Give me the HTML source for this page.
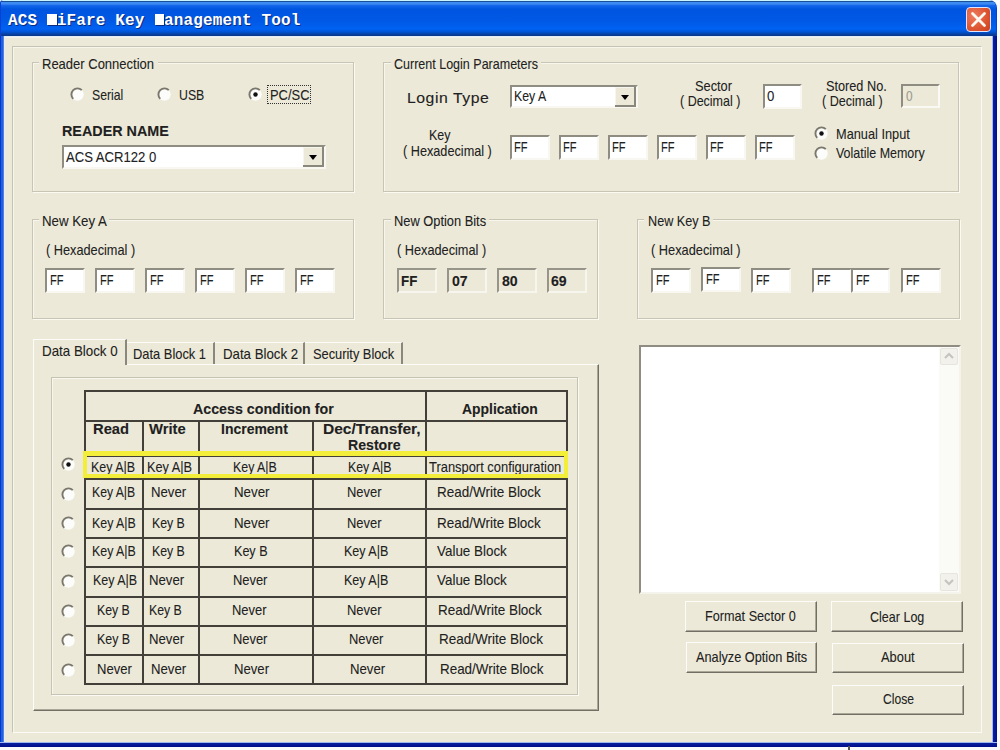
<!DOCTYPE html>
<html><head><meta charset="utf-8">
<style>
*{margin:0;padding:0;box-sizing:border-box}
html,body{width:1000px;height:750px;overflow:hidden;background:#FBFBFB;font-family:"Liberation Sans",sans-serif}
body>div,body>svg{position:absolute}
.a{position:absolute}
.t{white-space:nowrap;transform-origin:0 0;-webkit-text-stroke:0.1px #303030}
#ttext{left:8px;top:13px;transform-origin:0 0;font-family:"Liberation Mono",monospace;font-weight:bold;font-size:16px;line-height:16px;white-space:nowrap;color:#fff;text-shadow:1px 1px 0 #0a2a80}
.etch{border:1px solid #C5C3B2;box-shadow:1px 1px 0 #FBFAF4, inset 1px 1px 0 #F7F6EF}
.etch2{border-style:solid;border-width:1px;border-color:#C5C3B2 #FBFAF4 #FBFAF4 #C5C3B2;box-shadow:inset 1px 1px 0 #F6F5EE}
.grp{border:1px solid #C8C5B4;box-shadow:1px 1px 0 #FAF9F2, inset 1px 1px 0 #F6F5EE}
.ed{background:#fff;border-style:solid;border-width:2px;border-color:#8F8D82 #F8F7F2 #F8F7F2 #8F8D82}
.ro{background:#ECE9D8;border-color:#979589 #F6F5EE #F6F5EE #979589}
.dis{background:#ECE9D8;border-color:#8F8D82 #FAF9F4 #FAF9F4 #8F8D82}
.btn{background:#ECE9D8;border-style:solid;border-width:1px;border-color:#FCFCF8 #716F64 #716F64 #FCFCF8;box-shadow:inset -1px -1px 0 #ACA899}
.dd{background:#ECE9D8;border-style:solid;border-width:0 2px 2px 0;border-color:#8A887C;box-shadow:inset 1px 1px 0 #F6F5EE}
.dd i{position:absolute;width:0;height:0;border-left:4.5px solid transparent;border-right:4.5px solid transparent;border-top:5px solid #000}
.tabp{background:#ECE9D8;border-style:solid;border-width:1px;border-color:#FCFCF8 #716F64 #716F64 #FCFCF8;box-shadow:inset -1px -1px 0 #ACA899}
.tab{background:#ECE9D8;border-style:solid;border-width:1px 2px 0 0;border-color:#FCFCF8 #8A887C transparent transparent}
.tab.sel{border-width:1px 2px 0 1px;border-color:#FCFCF8 #8A887C transparent #FCFCF8}
.ln{background:#424039}
.log{border-color:#8F8D82 #F4F3EC #F4F3EC #8F8D82}
.sbb{background:#F2F1EC;border:1px solid #E6E5DE;border-radius:2px}
svg.r{position:absolute}

.blk{display:inline-block;width:9.6px;height:16px;vertical-align:top;position:relative}
.blk:after{content:'';position:absolute;left:0.4px;top:1.2px;width:9.2px;height:11px;background:#fff;box-shadow:1px 1px 0 #0a2a80}

.tc{display:inline-block;width:9.75px;text-align:center;vertical-align:top;font-weight:bold}
.blk{width:9.75px!important}

</style></head><body>
<div class="a" style="left:0;top:0;width:997px;height:747px;background:#0A3FD8;border-radius:3px 8px 0 0"></div>
<div class="a" style="left:1px;top:0;width:995px;height:36px;border-radius:2px 7px 0 0;background:linear-gradient(#C8F4FF 0px,#C8F4FF 0.8px,#1A4F9A 1px,#1A4F9A 2px,#3D8AF0 2.2px,#3D8AF0 4px,#1466EA 5.5px,#0055E0 9px,#0058E4 20px,#0062F2 29px,#0052D4 32px,#0A3A90 35px,#0A3A90 36px)"></div>
<div class="a" style="left:0;top:36px;width:4px;height:711px;background:linear-gradient(90deg,#0038D0 0,#0038D0 1px,#2060E0 1px,#2060E0 3px,#5080E0 3px)"></div>
<div class="a" style="left:992px;top:36px;width:5px;height:711px;background:linear-gradient(90deg,#A0B8F0 0,#A0B8F0 1px,#0A1F9E 1px,#00108A 5px)"></div>
<div class="a" style="left:0;top:742px;width:997px;height:5px;background:linear-gradient(#A0B8F0 0,#A0B8F0 1px,#0A1F9E 1px,#00108A 5px)"></div>
<div class="a" style="left:4px;top:36px;width:988px;height:706px;background:#ECE9D8;box-shadow:inset 1px 1px 0 #E4ECF8, inset 0 2px 0 #F2F1EA"></div>
<div id="ttext"><b class="tc">A</b><b class="tc">C</b><b class="tc">S</b><b class="tc">&nbsp;</b><span class="blk"></span><b class="tc">i</b><b class="tc">F</b><b class="tc">a</b><b class="tc">r</b><b class="tc">e</b><b class="tc">&nbsp;</b><b class="tc">K</b><b class="tc">e</b><b class="tc">y</b><b class="tc">&nbsp;</b><span class="blk"></span><b class="tc">a</b><b class="tc">n</b><b class="tc">a</b><b class="tc">g</b><b class="tc">e</b><b class="tc">m</b><b class="tc">e</b><b class="tc">n</b><b class="tc">t</b><b class="tc">&nbsp;</b><b class="tc">T</b><b class="tc">o</b><b class="tc">o</b><b class="tc">l</b></div>
<div class="a" style="left:966px;top:7px;width:25px;height:25px;border-radius:4px;border:1.5px solid #E0E4FF;background:radial-gradient(circle at 30% 35%,#EE7A60,#DD5530 60%,#C8401C)"></div>
<svg class="a" style="left:966px;top:7px" width="25" height="25"><path d="M6.5 6.5 L18.5 18.5 M18.5 6.5 L6.5 18.5" stroke="#FFF8F0" stroke-width="2.8" stroke-linecap="round"/></svg>
<div class="a" style="left:848px;top:746px;width:2px;height:4px;background:#555"></div>
<div class="etch2" style="left:12px;top:46px;width:970px;height:687px;"></div>
<div class="grp" style="left:32px;top:62px;width:322px;height:130px;"></div>
<div class="a" style="left:39px;top:55px;width:119px;height:14px;background:#ECE9D8"></div>
<div class="t" style="left:42.20px;top:56.00px;font-size:15px;line-height:15px;transform:scaleX(0.8667);color:#202020;">Reader Connection</div>
<svg class="r" style="left:69.5px;top:87.4px" width="15" height="15" viewBox="0 0 15 15"><circle cx="7.5" cy="7.5" r="6.2" fill="#fcfcfa"/><path d="M3.2 11.8 A6 6 0 0 1 11.8 3.2" stroke="#7a786c" stroke-width="1.9" fill="none"/></svg>
<div class="t" style="left:91.50px;top:87.00px;font-size:15px;line-height:15px;transform:scaleX(0.8158);color:#202020;">Serial</div>
<svg class="r" style="left:156.5px;top:87.4px" width="15" height="15" viewBox="0 0 15 15"><circle cx="7.5" cy="7.5" r="6.2" fill="#fcfcfa"/><path d="M3.2 11.8 A6 6 0 0 1 11.8 3.2" stroke="#7a786c" stroke-width="1.9" fill="none"/></svg>
<div class="t" style="left:178.60px;top:87.00px;font-size:15px;line-height:15px;transform:scaleX(0.8194);color:#202020;">USB</div>
<svg class="r" style="left:247.5px;top:87.4px" width="15" height="15" viewBox="0 0 15 15"><circle cx="7.5" cy="7.5" r="6.2" fill="#fcfcfa"/><path d="M3.2 11.8 A6 6 0 0 1 11.8 3.2" stroke="#7a786c" stroke-width="1.9" fill="none"/><circle cx="7.5" cy="7.5" r="2.2" fill="#111"/></svg>
<div class="t" style="left:269.60px;top:87.00px;font-size:15px;line-height:15px;transform:scaleX(0.8609);color:#202020;">PC/SC</div>
<div class="a" style="left:267px;top:85px;width:44px;height:19px;border:1px dotted #333"></div>
<div class="t" style="left:61.50px;top:123.00px;font-size:15px;line-height:15px;font-weight:bold;transform:scaleX(0.9571);color:#202020;">READER NAME</div>
<div class="ed" style="left:62px;top:145px;width:264px;height:24px;"></div>
<div class="dd" style="left:303px;top:147px;width:21px;height:20px"><i style="left:5.5px;top:8px"></i></div>
<div class="t" style="left:66.00px;top:148.50px;font-size:15px;line-height:15px;transform:scaleX(0.8738);color:#202020;">ACS ACR122 0</div>
<div class="grp" style="left:383px;top:62px;width:576px;height:130px;"></div>
<div class="a" style="left:391px;top:55px;width:150px;height:14px;background:#ECE9D8"></div>
<div class="t" style="left:393.70px;top:56.20px;font-size:15px;line-height:15px;transform:scaleX(0.8341);color:#202020;">Current Login Parameters</div>
<div class="t" style="left:406.80px;top:90.00px;font-size:15px;line-height:15px;letter-spacing:0.5px;transform:scaleX(1.0529);color:#202020;">Login Type</div>
<div class="ed" style="left:510px;top:85px;width:128px;height:23px;"></div>
<div class="dd" style="left:615px;top:87px;width:21px;height:20px"><i style="left:6px;top:7.8px"></i></div>
<div class="t" style="left:514.00px;top:88.00px;font-size:15px;line-height:15px;transform:scaleX(0.8205);color:#202020;">Key A</div>
<div class="t" style="left:695.30px;top:78.30px;font-size:15px;line-height:15px;transform:scaleX(0.8535);color:#202020;">Sector</div>
<div class="t" style="left:680.40px;top:93.00px;font-size:15px;line-height:15px;transform:scaleX(0.8329);color:#202020;">( Decimal )</div>
<div class="ed" style="left:763px;top:84px;width:39px;height:25px;"></div>
<div class="t" style="left:767.00px;top:88.20px;font-size:15px;line-height:15px;transform:scaleX(0.8750);color:#202020;">0</div>
<div class="t" style="left:825.70px;top:78.10px;font-size:15px;line-height:15px;transform:scaleX(0.8472);color:#202020;">Stored No.</div>
<div class="t" style="left:821.90px;top:93.20px;font-size:15px;line-height:15px;transform:scaleX(0.8384);color:#202020;">( Decimal )</div>
<div class="ed dis" style="left:901px;top:84px;width:39px;height:24px;"></div>
<div class="t" style="left:905.50px;top:87.80px;font-size:15px;line-height:15px;transform:scaleX(0.7875);color:#A4A294;">0</div>
<div class="t" style="left:429.20px;top:126.80px;font-size:15px;line-height:15px;transform:scaleX(0.8308);color:#202020;">Key</div>
<div class="t" style="left:403.40px;top:143.00px;font-size:15px;line-height:15px;transform:scaleX(0.8457);color:#202020;">( Hexadecimal )</div>
<div class="ed" style="left:510px;top:135px;width:40px;height:25px;"></div>
<div class="t" style="left:514.00px;top:139.00px;font-size:15px;line-height:15px;transform:scaleX(0.7389);color:#202020;">FF</div>
<div class="ed" style="left:559px;top:135px;width:40px;height:25px;"></div>
<div class="t" style="left:563.00px;top:139.00px;font-size:15px;line-height:15px;transform:scaleX(0.7389);color:#202020;">FF</div>
<div class="ed" style="left:608px;top:135px;width:40px;height:25px;"></div>
<div class="t" style="left:612.00px;top:139.00px;font-size:15px;line-height:15px;transform:scaleX(0.7389);color:#202020;">FF</div>
<div class="ed" style="left:657px;top:135px;width:40px;height:25px;"></div>
<div class="t" style="left:661.00px;top:139.00px;font-size:15px;line-height:15px;transform:scaleX(0.7389);color:#202020;">FF</div>
<div class="ed" style="left:706px;top:135px;width:40px;height:25px;"></div>
<div class="t" style="left:710.00px;top:139.00px;font-size:15px;line-height:15px;transform:scaleX(0.7389);color:#202020;">FF</div>
<div class="ed" style="left:755px;top:135px;width:40px;height:25px;"></div>
<div class="t" style="left:759.00px;top:139.00px;font-size:15px;line-height:15px;transform:scaleX(0.7389);color:#202020;">FF</div>
<svg class="r" style="left:813.5px;top:125.9px" width="15" height="15" viewBox="0 0 15 15"><circle cx="7.5" cy="7.5" r="6.2" fill="#fcfcfa"/><path d="M3.2 11.8 A6 6 0 0 1 11.8 3.2" stroke="#7a786c" stroke-width="1.9" fill="none"/><circle cx="7.5" cy="7.5" r="2.2" fill="#111"/></svg>
<div class="t" style="left:835.70px;top:125.50px;font-size:15px;line-height:15px;transform:scaleX(0.8511);color:#202020;">Manual Input</div>
<svg class="r" style="left:813.5px;top:145.5px" width="15" height="15" viewBox="0 0 15 15"><circle cx="7.5" cy="7.5" r="6.2" fill="#fcfcfa"/><path d="M3.2 11.8 A6 6 0 0 1 11.8 3.2" stroke="#7a786c" stroke-width="1.9" fill="none"/></svg>
<div class="t" style="left:835.70px;top:144.80px;font-size:15px;line-height:15px;transform:scaleX(0.8308);color:#202020;">Volatile Memory</div>
<div class="grp" style="left:32px;top:219px;width:322px;height:100px;"></div>
<div class="a" style="left:39px;top:212px;width:70px;height:14px;background:#ECE9D8"></div>
<div class="t" style="left:42.00px;top:212.80px;font-size:15px;line-height:15px;transform:scaleX(0.8836);color:#202020;">New Key A</div>
<div class="t" style="left:45.70px;top:242.00px;font-size:15px;line-height:15px;transform:scaleX(0.8486);color:#202020;">( Hexadecimal )</div>
<div class="ed" style="left:45px;top:268px;width:40px;height:25px;"></div>
<div class="t" style="left:49.50px;top:272.00px;font-size:15px;line-height:15px;transform:scaleX(0.7389);color:#202020;">FF</div>
<div class="ed" style="left:95px;top:268px;width:40px;height:25px;"></div>
<div class="t" style="left:99.50px;top:272.00px;font-size:15px;line-height:15px;transform:scaleX(0.7389);color:#202020;">FF</div>
<div class="ed" style="left:145px;top:268px;width:40px;height:25px;"></div>
<div class="t" style="left:149.50px;top:272.00px;font-size:15px;line-height:15px;transform:scaleX(0.7389);color:#202020;">FF</div>
<div class="ed" style="left:195px;top:268px;width:40px;height:25px;"></div>
<div class="t" style="left:199.50px;top:272.00px;font-size:15px;line-height:15px;transform:scaleX(0.7389);color:#202020;">FF</div>
<div class="ed" style="left:245px;top:268px;width:40px;height:25px;"></div>
<div class="t" style="left:249.50px;top:272.00px;font-size:15px;line-height:15px;transform:scaleX(0.7389);color:#202020;">FF</div>
<div class="ed" style="left:295px;top:268px;width:40px;height:25px;"></div>
<div class="t" style="left:299.50px;top:272.00px;font-size:15px;line-height:15px;transform:scaleX(0.7389);color:#202020;">FF</div>
<div class="grp" style="left:383px;top:219px;width:215px;height:100px;"></div>
<div class="a" style="left:391px;top:212px;width:98px;height:14px;background:#ECE9D8"></div>
<div class="t" style="left:393.80px;top:213.00px;font-size:15px;line-height:15px;transform:scaleX(0.8565);color:#202020;">New Option Bits</div>
<div class="t" style="left:397.20px;top:242.40px;font-size:15px;line-height:15px;transform:scaleX(0.8486);color:#202020;">( Hexadecimal )</div>
<div class="ed ro" style="left:397px;top:268px;width:40px;height:25px;"></div>
<div class="t" style="left:401.40px;top:272.50px;font-size:15px;line-height:15px;font-weight:bold;transform:scaleX(0.8889);color:#202020;">FF</div>
<div class="ed ro" style="left:447px;top:268px;width:40px;height:25px;"></div>
<div class="t" style="left:451.80px;top:272.50px;font-size:15px;line-height:15px;font-weight:bold;transform:scaleX(0.9412);color:#202020;">07</div>
<div class="ed ro" style="left:497px;top:268px;width:40px;height:25px;"></div>
<div class="t" style="left:501.60px;top:272.50px;font-size:15px;line-height:15px;font-weight:bold;transform:scaleX(0.9412);color:#202020;">80</div>
<div class="ed ro" style="left:547px;top:268px;width:40px;height:25px;"></div>
<div class="t" style="left:551.40px;top:272.50px;font-size:15px;line-height:15px;font-weight:bold;transform:scaleX(0.9412);color:#202020;">69</div>
<div class="grp" style="left:637px;top:219px;width:323px;height:100px;"></div>
<div class="a" style="left:644px;top:212px;width:69px;height:14px;background:#ECE9D8"></div>
<div class="t" style="left:647.80px;top:212.80px;font-size:15px;line-height:15px;transform:scaleX(0.8432);color:#202020;">New Key B</div>
<div class="t" style="left:650.70px;top:242.40px;font-size:15px;line-height:15px;transform:scaleX(0.8533);color:#202020;">( Hexadecimal )</div>
<div class="ed" style="left:651px;top:268px;width:40px;height:25px;"></div>
<div class="t" style="left:655.50px;top:272.00px;font-size:15px;line-height:15px;transform:scaleX(0.7389);color:#202020;">FF</div>
<div class="ed" style="left:701px;top:267px;width:40px;height:25px;"></div>
<div class="t" style="left:705.50px;top:271.00px;font-size:15px;line-height:15px;transform:scaleX(0.7389);color:#202020;">FF</div>
<div class="ed" style="left:751px;top:268px;width:40px;height:25px;"></div>
<div class="t" style="left:755.50px;top:272.00px;font-size:15px;line-height:15px;transform:scaleX(0.7389);color:#202020;">FF</div>
<div class="ed" style="left:812px;top:268px;width:40px;height:25px;"></div>
<div class="t" style="left:816.50px;top:272.00px;font-size:15px;line-height:15px;transform:scaleX(0.7389);color:#202020;">FF</div>
<div class="ed" style="left:851px;top:268px;width:39px;height:25px;"></div>
<div class="t" style="left:855.50px;top:272.00px;font-size:15px;line-height:15px;transform:scaleX(0.7389);color:#202020;">FF</div>
<div class="ed" style="left:901px;top:268px;width:40px;height:25px;"></div>
<div class="t" style="left:905.50px;top:272.00px;font-size:15px;line-height:15px;transform:scaleX(0.7389);color:#202020;">FF</div>
<div class="tabp" style="left:33px;top:364px;width:566px;height:347px;"></div>
<div class="tab" style="left:127px;top:342px;width:88px;height:22px;"></div>
<div class="tab" style="left:215px;top:342px;width:90px;height:22px;"></div>
<div class="tab" style="left:305px;top:342px;width:98px;height:22px;"></div>
<div class="tab sel" style="left:33px;top:339px;width:94px;height:26px;"></div>
<div class="t" style="left:42.40px;top:343.00px;font-size:15px;line-height:15px;transform:scaleX(0.8894);color:#202020;">Data Block 0</div>
<div class="t" style="left:133.00px;top:345.60px;font-size:15px;line-height:15px;transform:scaleX(0.8588);color:#202020;">Data Block 1</div>
<div class="t" style="left:223.00px;top:345.60px;font-size:15px;line-height:15px;transform:scaleX(0.8824);color:#202020;">Data Block 2</div>
<div class="t" style="left:313.00px;top:345.60px;font-size:15px;line-height:15px;transform:scaleX(0.8542);color:#202020;">Security Block</div>
<div class="etch" style="left:51px;top:377px;width:527px;height:318px;"></div>
<div class="ln" style="left:84px;top:390px;width:484px;height:2px"></div>
<div class="ln" style="left:84px;top:420px;width:484px;height:2px"></div>
<div class="ln" style="left:84px;top:455px;width:484px;height:2px"></div>
<div class="ln" style="left:84px;top:478px;width:484px;height:2px"></div>
<div class="ln" style="left:84px;top:508px;width:484px;height:2px"></div>
<div class="ln" style="left:84px;top:537px;width:484px;height:2px"></div>
<div class="ln" style="left:84px;top:566px;width:484px;height:2px"></div>
<div class="ln" style="left:84px;top:596px;width:484px;height:2px"></div>
<div class="ln" style="left:84px;top:625px;width:484px;height:2px"></div>
<div class="ln" style="left:84px;top:654px;width:484px;height:2px"></div>
<div class="ln" style="left:84px;top:683px;width:484px;height:2px"></div>
<div class="ln" style="left:84px;top:390px;width:2px;height:295px"></div>
<div class="ln" style="left:566px;top:390px;width:2px;height:295px"></div>
<div class="ln" style="left:425px;top:390px;width:2px;height:295px"></div>
<div class="ln" style="left:142px;top:420px;width:2px;height:265px"></div>
<div class="ln" style="left:198px;top:420px;width:2px;height:265px"></div>
<div class="ln" style="left:312px;top:420px;width:2px;height:265px"></div>
<div class="t" style="left:192.90px;top:400.60px;font-size:15px;line-height:15px;font-weight:bold;transform:scaleX(0.9483);color:#202020;">Access condition for</div>
<div class="t" style="left:461.90px;top:400.60px;font-size:15px;line-height:15px;font-weight:bold;transform:scaleX(0.9280);color:#202020;">Application</div>
<div class="t" style="left:93.40px;top:421.00px;font-size:15px;line-height:15px;font-weight:bold;transform:scaleX(0.9838);color:#202020;">Read</div>
<div class="t" style="left:149.40px;top:421.00px;font-size:15px;line-height:15px;font-weight:bold;transform:scaleX(0.9865);color:#202020;">Write</div>
<div class="t" style="left:220.90px;top:421.00px;font-size:15px;line-height:15px;font-weight:bold;transform:scaleX(0.9319);color:#202020;">Increment</div>
<div class="t" style="left:323.00px;top:421.00px;font-size:15px;line-height:15px;font-weight:bold;transform:scaleX(1.0362);color:#202020;">Dec/Transfer,</div>
<div class="t" style="left:347.60px;top:437.00px;font-size:15px;line-height:15px;font-weight:bold;transform:scaleX(0.9411);color:#202020;">Restore</div>
<div class="t" style="left:90.60px;top:458.80px;font-size:15px;line-height:15px;transform:scaleX(0.8302);color:#202020;">Key A|B</div>
<div class="t" style="left:146.60px;top:458.80px;font-size:15px;line-height:15px;transform:scaleX(0.8472);color:#202020;">Key A|B</div>
<div class="t" style="left:232.60px;top:458.80px;font-size:15px;line-height:15px;transform:scaleX(0.8245);color:#202020;">Key A|B</div>
<div class="t" style="left:347.60px;top:458.80px;font-size:15px;line-height:15px;transform:scaleX(0.8189);color:#202020;">Key A|B</div>
<div class="t" style="left:429.40px;top:458.80px;font-size:15px;line-height:15px;transform:scaleX(0.8604);color:#202020;">Transport configuration</div>
<svg class="r" style="left:60.7px;top:457.3px" width="15" height="15" viewBox="0 0 15 15"><circle cx="7.5" cy="7.5" r="6.2" fill="#fcfcfa"/><path d="M3.2 11.8 A6 6 0 0 1 11.8 3.2" stroke="#7a786c" stroke-width="1.9" fill="none"/><circle cx="7.5" cy="7.5" r="2.2" fill="#111"/></svg>
<div class="t" style="left:91.50px;top:483.80px;font-size:15px;line-height:15px;transform:scaleX(0.8132);color:#202020;">Key A|B</div>
<div class="t" style="left:150.80px;top:483.80px;font-size:15px;line-height:15px;transform:scaleX(0.8775);color:#202020;">Never</div>
<div class="t" style="left:233.50px;top:483.80px;font-size:15px;line-height:15px;transform:scaleX(0.8875);color:#202020;">Never</div>
<div class="t" style="left:346.50px;top:483.80px;font-size:15px;line-height:15px;transform:scaleX(0.8625);color:#202020;">Never</div>
<div class="t" style="left:436.60px;top:483.80px;font-size:15px;line-height:15px;transform:scaleX(0.8983);color:#202020;">Read/Write Block</div>
<svg class="r" style="left:60.7px;top:487.0px" width="15" height="15" viewBox="0 0 15 15"><circle cx="7.5" cy="7.5" r="6.2" fill="#fcfcfa"/><path d="M3.2 11.8 A6 6 0 0 1 11.8 3.2" stroke="#7a786c" stroke-width="1.9" fill="none"/></svg>
<div class="t" style="left:92.00px;top:514.70px;font-size:15px;line-height:15px;transform:scaleX(0.8245);color:#202020;">Key A|B</div>
<div class="t" style="left:152.20px;top:514.70px;font-size:15px;line-height:15px;transform:scaleX(0.8200);color:#202020;">Key B</div>
<div class="t" style="left:233.50px;top:514.70px;font-size:15px;line-height:15px;transform:scaleX(0.8875);color:#202020;">Never</div>
<div class="t" style="left:346.50px;top:514.70px;font-size:15px;line-height:15px;transform:scaleX(0.8625);color:#202020;">Never</div>
<div class="t" style="left:436.60px;top:514.70px;font-size:15px;line-height:15px;transform:scaleX(0.8983);color:#202020;">Read/Write Block</div>
<svg class="r" style="left:60.7px;top:515.6px" width="15" height="15" viewBox="0 0 15 15"><circle cx="7.5" cy="7.5" r="6.2" fill="#fcfcfa"/><path d="M3.2 11.8 A6 6 0 0 1 11.8 3.2" stroke="#7a786c" stroke-width="1.9" fill="none"/></svg>
<div class="t" style="left:92.00px;top:543.20px;font-size:15px;line-height:15px;transform:scaleX(0.8245);color:#202020;">Key A|B</div>
<div class="t" style="left:152.20px;top:543.20px;font-size:15px;line-height:15px;transform:scaleX(0.8200);color:#202020;">Key B</div>
<div class="t" style="left:233.50px;top:543.20px;font-size:15px;line-height:15px;transform:scaleX(0.8375);color:#202020;">Key B</div>
<div class="t" style="left:344.40px;top:543.20px;font-size:15px;line-height:15px;transform:scaleX(0.8340);color:#202020;">Key A|B</div>
<div class="t" style="left:436.60px;top:543.20px;font-size:15px;line-height:15px;transform:scaleX(0.8937);color:#202020;">Value Block</div>
<svg class="r" style="left:60.7px;top:544.2px" width="15" height="15" viewBox="0 0 15 15"><circle cx="7.5" cy="7.5" r="6.2" fill="#fcfcfa"/><path d="M3.2 11.8 A6 6 0 0 1 11.8 3.2" stroke="#7a786c" stroke-width="1.9" fill="none"/></svg>
<div class="t" style="left:93.40px;top:571.60px;font-size:15px;line-height:15px;transform:scaleX(0.8302);color:#202020;">Key A|B</div>
<div class="t" style="left:149.40px;top:571.60px;font-size:15px;line-height:15px;transform:scaleX(0.8775);color:#202020;">Never</div>
<div class="t" style="left:232.60px;top:571.60px;font-size:15px;line-height:15px;transform:scaleX(0.8600);color:#202020;">Never</div>
<div class="t" style="left:344.40px;top:571.60px;font-size:15px;line-height:15px;transform:scaleX(0.8340);color:#202020;">Key A|B</div>
<div class="t" style="left:436.60px;top:571.60px;font-size:15px;line-height:15px;transform:scaleX(0.8937);color:#202020;">Value Block</div>
<svg class="r" style="left:60.7px;top:574.2px" width="15" height="15" viewBox="0 0 15 15"><circle cx="7.5" cy="7.5" r="6.2" fill="#fcfcfa"/><path d="M3.2 11.8 A6 6 0 0 1 11.8 3.2" stroke="#7a786c" stroke-width="1.9" fill="none"/></svg>
<div class="t" style="left:97.00px;top:601.90px;font-size:15px;line-height:15px;transform:scaleX(0.8200);color:#202020;">Key B</div>
<div class="t" style="left:149.40px;top:601.90px;font-size:15px;line-height:15px;transform:scaleX(0.8200);color:#202020;">Key B</div>
<div class="t" style="left:231.50px;top:601.90px;font-size:15px;line-height:15px;transform:scaleX(0.8625);color:#202020;">Never</div>
<div class="t" style="left:347.40px;top:601.90px;font-size:15px;line-height:15px;transform:scaleX(0.8650);color:#202020;">Never</div>
<div class="t" style="left:437.50px;top:601.90px;font-size:15px;line-height:15px;transform:scaleX(0.8983);color:#202020;">Read/Write Block</div>
<svg class="r" style="left:60.7px;top:604.2px" width="15" height="15" viewBox="0 0 15 15"><circle cx="7.5" cy="7.5" r="6.2" fill="#fcfcfa"/><path d="M3.2 11.8 A6 6 0 0 1 11.8 3.2" stroke="#7a786c" stroke-width="1.9" fill="none"/></svg>
<div class="t" style="left:97.00px;top:631.30px;font-size:15px;line-height:15px;transform:scaleX(0.8250);color:#202020;">Key B</div>
<div class="t" style="left:149.40px;top:631.30px;font-size:15px;line-height:15px;transform:scaleX(0.8775);color:#202020;">Never</div>
<div class="t" style="left:232.60px;top:631.30px;font-size:15px;line-height:15px;transform:scaleX(0.8600);color:#202020;">Never</div>
<div class="t" style="left:348.60px;top:631.30px;font-size:15px;line-height:15px;transform:scaleX(0.8600);color:#202020;">Never</div>
<div class="t" style="left:438.70px;top:631.30px;font-size:15px;line-height:15px;transform:scaleX(0.8991);color:#202020;">Read/Write Block</div>
<svg class="r" style="left:60.7px;top:633.0px" width="15" height="15" viewBox="0 0 15 15"><circle cx="7.5" cy="7.5" r="6.2" fill="#fcfcfa"/><path d="M3.2 11.8 A6 6 0 0 1 11.8 3.2" stroke="#7a786c" stroke-width="1.9" fill="none"/></svg>
<div class="t" style="left:97.00px;top:660.70px;font-size:15px;line-height:15px;transform:scaleX(0.8700);color:#202020;">Never</div>
<div class="t" style="left:150.80px;top:660.70px;font-size:15px;line-height:15px;transform:scaleX(0.8775);color:#202020;">Never</div>
<div class="t" style="left:233.50px;top:660.70px;font-size:15px;line-height:15px;transform:scaleX(0.8750);color:#202020;">Never</div>
<div class="t" style="left:349.50px;top:660.70px;font-size:15px;line-height:15px;transform:scaleX(0.8775);color:#202020;">Never</div>
<div class="t" style="left:440.20px;top:660.70px;font-size:15px;line-height:15px;transform:scaleX(0.8948);color:#202020;">Read/Write Block</div>
<svg class="r" style="left:60.7px;top:663.0px" width="15" height="15" viewBox="0 0 15 15"><circle cx="7.5" cy="7.5" r="6.2" fill="#fcfcfa"/><path d="M3.2 11.8 A6 6 0 0 1 11.8 3.2" stroke="#7a786c" stroke-width="1.9" fill="none"/></svg>
<div class="a" style="left:83px;top:451px;width:485px;height:27px;border:4px solid #F2EE3A;border-top-width:5px"></div>
<div class="ed log" style="left:639px;top:345px;width:322px;height:249px;"></div>
<div class="a" style="left:939px;top:347px;width:20px;height:245px;background:#FAFAF7"></div>
<div class="a sbb" style="left:940px;top:348px;width:18px;height:17px"></div>
<div class="a sbb" style="left:940px;top:573px;width:18px;height:18px"></div>
<svg class="a" style="left:940px;top:348px" width="18" height="17"><path d="M5 10 L9 6 L13 10" stroke="#C4C3BC" stroke-width="2" fill="none"/></svg>
<svg class="a" style="left:940px;top:573px" width="18" height="18"><path d="M5 7 L9 11 L13 7" stroke="#C4C3BC" stroke-width="2" fill="none"/></svg>
<div class="btn" style="left:685px;top:601px;width:132px;height:31px;"></div>
<div class="t" style="left:704.60px;top:607.70px;font-size:15px;line-height:15px;transform:scaleX(0.8444);color:#202020;">Format Sector 0</div>
<div class="btn" style="left:831px;top:601px;width:132px;height:31px;"></div>
<div class="t" style="left:870.00px;top:608.50px;font-size:15px;line-height:15px;transform:scaleX(0.8354);color:#202020;">Clear Log</div>
<div class="btn" style="left:686px;top:642px;width:131px;height:31px;"></div>
<div class="t" style="left:695.80px;top:649.00px;font-size:15px;line-height:15px;transform:scaleX(0.8489);color:#202020;">Analyze Option Bits</div>
<div class="btn" style="left:832px;top:643px;width:132px;height:30px;"></div>
<div class="t" style="left:881.00px;top:649.40px;font-size:15px;line-height:15px;transform:scaleX(0.8575);color:#202020;">About</div>
<div class="btn" style="left:832px;top:685px;width:132px;height:30px;"></div>
<div class="t" style="left:883.30px;top:691.40px;font-size:15px;line-height:15px;transform:scaleX(0.8079);color:#202020;">Close</div>
</body></html>
